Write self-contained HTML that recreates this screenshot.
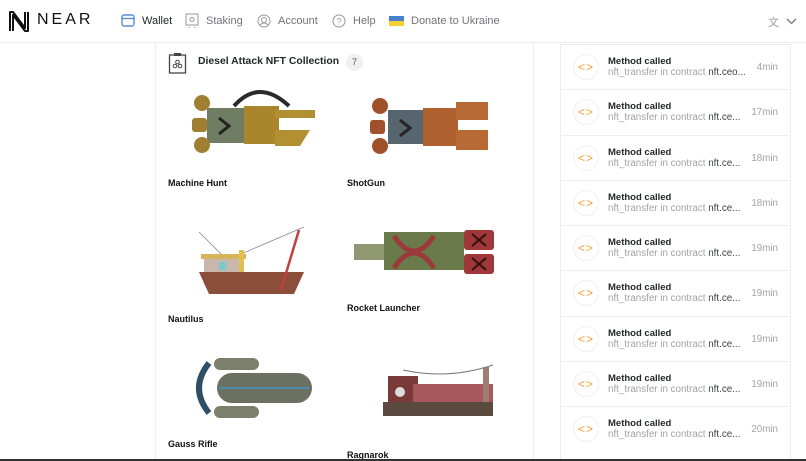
<!DOCTYPE html><html><head><meta charset="utf-8"><style>
*{margin:0;padding:0;box-sizing:border-box}
body{width:806px;height:461px;overflow:hidden;background:#fff;font-family:"Liberation Sans",sans-serif;position:relative;color:#24272a}
.hdr{position:absolute;left:0;top:0;width:806px;height:43px;border-bottom:1px solid #eceef0}
.nav{position:absolute;top:15px;font-size:11px;color:#72727a}
.ab{position:absolute}
.main{position:absolute;left:155px;top:43px;width:379px;height:418px;border-left:1px solid #eceef0;border-right:1px solid #eceef0}
.lbl{position:absolute;font-size:9px;font-weight:bold;color:#111}
.list{position:absolute;left:560px;top:44px;width:231px;height:417px;border:1px solid #eceef0;border-top:none}
.it{height:45.3px;border-top:1px solid #eceef0;position:relative}
.ic{position:absolute;left:12px;top:9px;width:26px;height:26px;border-radius:50%;border:1px solid #f1f1f1;color:#f0a030;font-size:12px;text-align:center;line-height:24px;letter-spacing:1px}
.t1{position:absolute;left:47px;top:11px;font-size:9.5px;font-weight:bold;color:#24272a}
.t2{position:absolute;left:47px;top:22px;font-size:9.8px;color:#a2a2a8;white-space:nowrap}
.t2 b{font-weight:normal;color:#3f4246}
.tm{position:absolute;right:12px;top:17px;font-size:9.8px;color:#a2a2a8}
.bot{position:absolute;left:0;top:459px;width:806px;height:2px;background:#333}
</style></head><body>
<div class="hdr">
<svg class="ab" style="left:8px;top:11px" width="22" height="21" viewBox="0 0 22 21"><path d="M2 20V1h3l12 16V1M5 20V4l12 16h3V1" fill="none" stroke="#111" stroke-width="2" stroke-linejoin="round"/></svg>
<div class="ab" style="left:37px;top:11px;font-size:16px;letter-spacing:3px;color:#111">NEAR</div>
<svg class="ab" style="left:121px;top:14px" width="14" height="13"><rect x="1" y="1" width="12" height="11" rx="2" fill="none" stroke="#5b8fd6" stroke-width="1.4"/><line x1="1" y1="4.5" x2="13" y2="4.5" stroke="#5b8fd6" stroke-width="1.4"/></svg>
<div class="nav" style="left:142px;color:#24272a">Wallet</div>
<svg class="ab" style="left:185px;top:13px" width="14" height="16"><rect x="1" y="1" width="12" height="11" fill="none" stroke="#999" stroke-width="1"/><circle cx="7" cy="6.5" r="2" fill="none" stroke="#999"/><line x1="4" y1="14" x2="4" y2="15" stroke="#999"/><line x1="10" y1="14" x2="10" y2="15" stroke="#999"/></svg>
<div class="nav" style="left:206px">Staking</div>
<svg class="ab" style="left:257px;top:14px" width="14" height="14"><circle cx="7" cy="7" r="6" fill="none" stroke="#999"/><circle cx="7" cy="6" r="2.5" fill="none" stroke="#999"/><path d="M3 11q4-4 8 0" fill="none" stroke="#999"/></svg>
<div class="nav" style="left:278px">Account</div>
<svg class="ab" style="left:332px;top:14px" width="14" height="14"><circle cx="7" cy="7" r="6" fill="none" stroke="#999"/><text x="7" y="10.5" font-size="9" text-anchor="middle" fill="#999" font-family="Liberation Sans">?</text></svg>
<div class="nav" style="left:353px">Help</div>
<div class="ab" style="left:389px;top:16px;width:15px;height:5px;background:#4a7fd0"></div><div class="ab" style="left:389px;top:21px;width:15px;height:5px;background:#f5cf34"></div>
<div class="nav" style="left:411px">Donate to Ukraine</div>
<div class="ab" style="left:768px;top:14px;font-size:11px;color:#999">文</div>
<svg class="ab" style="left:786px;top:18px" width="11" height="7"><path d="M1 1l4.5 4.5L10 1" fill="none" stroke="#777" stroke-width="1.3"/></svg>
</div>
<div class="main">
<svg class="ab" style="left:12px;top:9px" width="20" height="22"><rect x="1.5" y="3" width="16" height="18" fill="none" stroke="#444" stroke-width="1.3"/><rect x="6" y="1" width="7" height="3" fill="#444"/><circle cx="9.5" cy="10" r="1.8" fill="none" stroke="#444"/><circle cx="7" cy="14" r="1.8" fill="none" stroke="#444"/><circle cx="12" cy="14" r="1.8" fill="none" stroke="#444"/></svg>
<div class="ab" style="left:42px;top:13px;font-size:10.4px;font-weight:bold;color:#24272a">Diesel Attack NFT Collection</div>
<div class="ab" style="left:190px;top:11px;width:17px;height:17px;border-radius:50%;background:#f0f0f1;font-size:9px;text-align:center;line-height:17px;color:#555">7</div>

<svg class="ab" style="left:33px;top:45px" width="130" height="72"><path d="M45 18q25-28 55 0" fill="none" stroke="#2a2a2a" stroke-width="4"/><rect x="18" y="20" width="70" height="35" fill="#6f7d62"/><rect x="55" y="18" width="35" height="38" fill="#a9862c"/><rect x="86" y="22" width="40" height="8" fill="#b28f30"/><path d="M86 42h35l-10 16H86z" fill="#b28f30"/><circle cx="13" cy="15" r="8" fill="#a08030"/><rect x="3" y="30" width="15" height="14" rx="3" fill="#a08030"/><circle cx="13" cy="57" r="8" fill="#a08030"/><path d="M30 30l10 8-10 8" stroke="#222" stroke-width="3" fill="none"/></svg>
<div class="lbl" style="left:12px;top:135px">Machine Hunt</div>

<svg class="ab" style="left:212px;top:49px" width="122" height="68"><rect x="20" y="18" width="70" height="34" fill="#56656e"/><rect x="55" y="16" width="35" height="38" fill="#b0602e"/><path d="M88 10h32v18H88zM88 38h32v20H88z" fill="#b86a34"/><circle cx="12" cy="14" r="8" fill="#a0502a"/><rect x="2" y="28" width="15" height="14" rx="3" fill="#a0502a"/><circle cx="12" cy="54" r="8" fill="#a0502a"/><path d="M32 28l10 8-10 8" stroke="#222" stroke-width="3" fill="none"/></svg>
<div class="lbl" style="left:191px;top:135px">ShotGun</div>

<svg class="ab" style="left:33px;top:179px" width="132" height="72"><path d="M10 10l40 40M45 35l70-30" stroke="#888" stroke-width=".8"/><rect x="15" y="35" width="40" height="28" fill="#c9b7ad"/><rect x="12" y="32" width="45" height="5" fill="#d7b35a"/><rect x="50" y="28" width="5" height="35" fill="#e0c050"/><path d="M10 50h105l-10 22H20z" fill="#8a4e3a"/><path d="M110 8l-18 60" stroke="#c04040" stroke-width="2.5"/><rect x="30" y="40" width="7" height="8" fill="#7cc"/></svg>
<div class="lbl" style="left:12px;top:271px">Nautilus</div>

<svg class="ab" style="left:188px;top:183px" width="160" height="52"><rect x="10" y="18" width="40" height="16" fill="#8f9870"/><rect x="40" y="6" width="80" height="38" fill="#6b7a4a"/><path d="M50 10q20 30 40 0M50 42q20-30 40 0" stroke="#9a3a3a" stroke-width="5" fill="none"/><rect x="120" y="4" width="30" height="20" rx="3" fill="#a03838"/><rect x="120" y="28" width="30" height="20" rx="3" fill="#a03838"/><path d="M128 8l14 12M142 8l-14 12M128 32l14 12M142 32l-14 12" stroke="#311" stroke-width="2"/></svg>
<div class="lbl" style="left:191px;top:260px">Rocket Launcher</div>

<svg class="ab" style="left:33px;top:312px" width="125" height="66"><path d="M20 8q-20 25 0 50" stroke="#2f4f66" stroke-width="6" fill="none"/><rect x="25" y="3" width="45" height="12" rx="6" fill="#7c806a"/><rect x="25" y="51" width="45" height="12" rx="6" fill="#7c806a"/><rect x="28" y="18" width="95" height="30" rx="15" fill="#6c7060"/><line x1="30" y1="33" x2="120" y2="33" stroke="#4d88b0" stroke-width="2"/></svg>
<div class="lbl" style="left:12px;top:396px">Gauss Rifle</div>

<svg class="ab" style="left:222px;top:319px" width="122" height="66"><path d="M25 8q45 10 90-5" stroke="#777" fill="none"/><rect x="10" y="14" width="30" height="40" fill="#7a3a3a"/><rect x="35" y="22" width="80" height="30" fill="#a8585c"/><rect x="105" y="5" width="6" height="45" fill="#9a8070"/><rect x="5" y="40" width="110" height="14" fill="#5a4a40"/><circle cx="22" cy="30" r="5" fill="#ddd"/></svg>
<div class="lbl" style="left:191px;top:407px">Ragnarok</div>
</div>

<div class="list">
<div class="it"><div class="ic">&lt;&gt;</div><div class="t1">Method called</div><div class="t2">nft_transfer in contract <b>nft.ceo...</b></div><div class="tm">4min</div></div>
<div class="it"><div class="ic">&lt;&gt;</div><div class="t1">Method called</div><div class="t2">nft_transfer in contract <b>nft.ce...</b></div><div class="tm">17min</div></div>
<div class="it"><div class="ic">&lt;&gt;</div><div class="t1">Method called</div><div class="t2">nft_transfer in contract <b>nft.ce...</b></div><div class="tm">18min</div></div>
<div class="it"><div class="ic">&lt;&gt;</div><div class="t1">Method called</div><div class="t2">nft_transfer in contract <b>nft.ce...</b></div><div class="tm">18min</div></div>
<div class="it"><div class="ic">&lt;&gt;</div><div class="t1">Method called</div><div class="t2">nft_transfer in contract <b>nft.ce...</b></div><div class="tm">19min</div></div>
<div class="it"><div class="ic">&lt;&gt;</div><div class="t1">Method called</div><div class="t2">nft_transfer in contract <b>nft.ce...</b></div><div class="tm">19min</div></div>
<div class="it"><div class="ic">&lt;&gt;</div><div class="t1">Method called</div><div class="t2">nft_transfer in contract <b>nft.ce...</b></div><div class="tm">19min</div></div>
<div class="it"><div class="ic">&lt;&gt;</div><div class="t1">Method called</div><div class="t2">nft_transfer in contract <b>nft.ce...</b></div><div class="tm">19min</div></div>
<div class="it"><div class="ic">&lt;&gt;</div><div class="t1">Method called</div><div class="t2">nft_transfer in contract <b>nft.ce...</b></div><div class="tm">20min</div></div>
</div>
<div class="bot"></div>
</body></html>
